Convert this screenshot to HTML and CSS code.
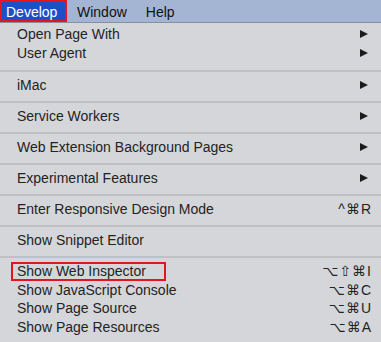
FILE: index.html
```html
<html>
    <head>
        <link rel="stylesheet" href="styles.css">
    </head>
    <body>
        <div class="menubar">
            <span class="menuTitle active">Develop</span>
            <span class="menuTitle">Window</span>
            <span class="menuTitle">Help</span>
        </div>
        <div class="menu">
            <div class="group first">
                <div class="item"><span>Open Page With</span><span class="arrow"></span></div>
                <div class="item"><span>User Agent</span><span class="arrow"></span></div>
            </div>
            <div class="group">
                <div class="item"><span>iMac</span><span class="arrow"></span></div>
            </div>
            <div class="group">
                <div class="item"><span>Service Workers</span><span class="arrow"></span></div>
            </div>
            <div class="group">
                <div class="item"><span>Web Extension Background Pages</span><span class="arrow"></span></div>
            </div>
            <div class="group">
                <div class="item"><span>Experimental Features</span><span class="arrow"></span></div>
            </div>
            <div class="group">
                <div class="item"><span>Enter Responsive Design Mode</span><span class="keys">^⌘R</span></div>
            </div>
            <div class="group">
                <div class="item"><span>Show Snippet Editor</span></div>
            </div>
            <div class="group">
                <div class="item"><span class="marked">Show Web Inspector</span><span class="keys">⌥⇧⌘I</span></div>
                <div class="item"><span>Show JavaScript Console</span><span class="keys">⌥⌘C</span></div>
                <div class="item"><span>Show Page Source</span><span class="keys">⌥⌘U</span></div>
                <div class="item"><span>Show Page Resources</span><span class="keys">⌥⌘A</span></div>
            </div>
        </div>
    </body>
</html>
```

FILE: styles.css
```css
/* macOS style dropdown menu */
html{
    background-color: #d5d6d9;
}
body{
    margin: 0;
    font-family: "Liberation Sans", Arial, sans-serif;
    font-size: 14px;
    color: #232323;
    overflow: hidden;
}
.menubar{
    display: flex;
    height: 22px;
    line-height: 24px;
    background-color: #a4b5d3;
    border-bottom: 1px solid #8a8f99;
    color: #111111;
}
.menuTitle{
    padding: 0 9px 0 10px;
}
.menuTitle.active{
    width: 67px;
    box-sizing: border-box;
    padding: 0 0 0 6px;
    background-color: #1f4fc8;
    color: #ffffff;
    box-shadow: inset 0 0 0 2px #e3161e;
}
.group{
    padding: 4px 0 6.5px 0;
    border-top: 2px solid #bfc0c3;
}
.group.first{
    padding: 2px 0 8px 0;
    border-top: none;
}
.item{
    display: flex;
    justify-content: space-between;
    align-items: center;
    height: 18.5px;
    line-height: 18.5px;
    padding: 0 10px 0 17px;
}
.arrow{
    width: 0;
    height: 0;
    border-left: 8px solid #1c1c1c;
    border-top: 4.5px solid transparent;
    border-bottom: 4.5px solid transparent;
    margin-right: 3px;
}
.keys{
    font-family: "Liberation Sans", "DejaVu Sans", sans-serif;
    letter-spacing: 1px;
    margin-right: -1px;
}
.marked{
    display: block;
    width: 155px;
    height: 19px;
    box-sizing: border-box;
    margin-left: -6px;
    padding-left: 6px;
    box-shadow: inset 0 0 0 2px #e3161e;
}
```
